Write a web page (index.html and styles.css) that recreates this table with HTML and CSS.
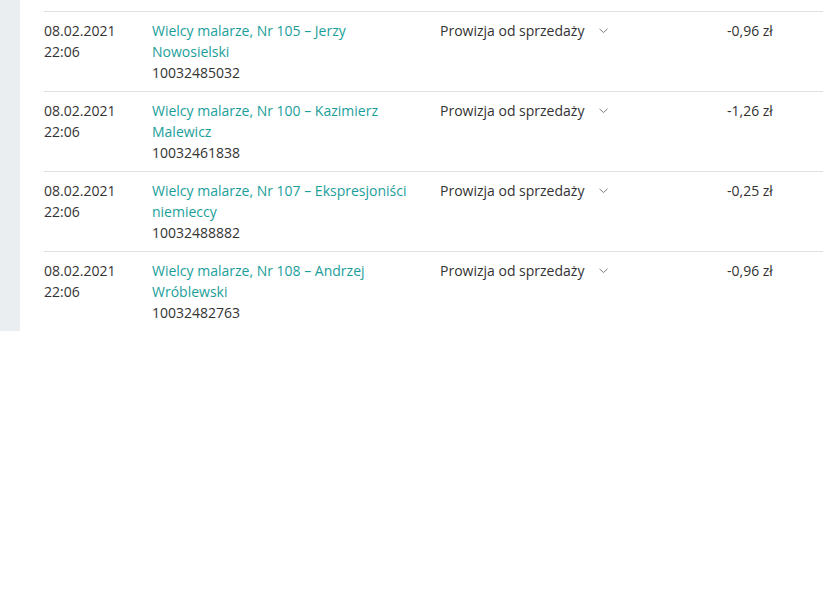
FILE: index.html
```html
<!DOCTYPE html>
<html lang="pl">
<head>
<meta charset="utf-8">
<link rel="stylesheet" href="styles.css">
</head>
<body>
<div class="page">
  <aside class="side"></aside>
  <main class="list">
    <div class="row">
      <div class="date">08.02.2021<br>22:06</div>
      <div class="offer"><a class="link" href="#">Wielcy malarze, Nr 105 – Jerzy Nowosielski</a><div>10032485032</div></div>
      <div class="type"><span>Prowizja od sprzedaży</span><svg class="chev" width="9" height="6" viewBox="0 0 9 6"><path d="M0.5 0.8 L4.5 4.6 L8.5 0.8" fill="none" stroke="#7a7a7a" stroke-width="1"/></svg></div>
      <div class="amount">-0,96 zł</div>
    </div>
    <div class="row">
      <div class="date">08.02.2021<br>22:06</div>
      <div class="offer"><a class="link" href="#">Wielcy malarze, Nr 100 – Kazimierz Malewicz</a><div>10032461838</div></div>
      <div class="type"><span>Prowizja od sprzedaży</span><svg class="chev" width="9" height="6" viewBox="0 0 9 6"><path d="M0.5 0.8 L4.5 4.6 L8.5 0.8" fill="none" stroke="#7a7a7a" stroke-width="1"/></svg></div>
      <div class="amount">-1,26 zł</div>
    </div>
    <div class="row">
      <div class="date">08.02.2021<br>22:06</div>
      <div class="offer"><a class="link" href="#">Wielcy malarze, Nr 107 – Ekspresjoniści niemieccy</a><div>10032488882</div></div>
      <div class="type"><span>Prowizja od sprzedaży</span><svg class="chev" width="9" height="6" viewBox="0 0 9 6"><path d="M0.5 0.8 L4.5 4.6 L8.5 0.8" fill="none" stroke="#7a7a7a" stroke-width="1"/></svg></div>
      <div class="amount">-0,25 zł</div>
    </div>
    <div class="row last">
      <div class="date">08.02.2021<br>22:06</div>
      <div class="offer"><a class="link" href="#">Wielcy malarze, Nr 108 – Andrzej Wróblewski</a><div>10032482763</div></div>
      <div class="type"><span>Prowizja od sprzedaży</span><svg class="chev" width="9" height="6" viewBox="0 0 9 6"><path d="M0.5 0.8 L4.5 4.6 L8.5 0.8" fill="none" stroke="#7a7a7a" stroke-width="1"/></svg></div>
      <div class="amount">-0,96 zł</div>
    </div>
  </main>
</div>
</body>
</html>
```
FILE: styles.css
```css
html, body {
  margin: 0;
  padding: 0;
  background: #fff;
}
body {
  font-family: "Open Sans", "Liberation Sans", sans-serif;
  font-size: 14px;
  line-height: 21px;
  color: #333;
}
.page {
  display: flex;
  align-items: stretch;
}
.side {
  width: 20px;
  background: #ebeef1;
  flex: none;
}
.list {
  flex: 1;
  padding-top: 11px;
  padding-left: 24px;
}
.row {
  display: grid;
  grid-template-columns: 108px 288px 287px 1fr;
  border-top: 1px solid #e0e0e0;
  padding: 8px 0;
  height: 63px;
}
.offer {
  padding-right: 16px;
}
.link {
  color: #1a9e9a;
  text-decoration: none;
}
.type {
  display: flex;
  align-items: flex-start;
}
.chev {
  margin-left: 15px;
  margin-top: 8px;
}
```
